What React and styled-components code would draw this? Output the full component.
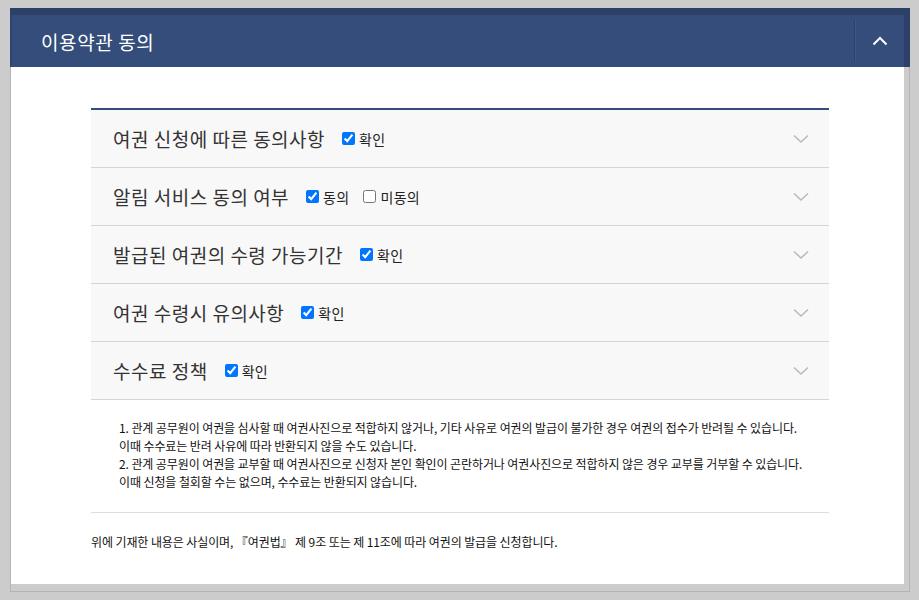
import React, { useState } from "react";
import styled, { createGlobalStyle } from "styled-components";

const GlobalStyle = createGlobalStyle`
  html, body {
    margin: 0;
    padding: 0;
    background: #cccccc;
  }
  body {
    font-family: "Noto Sans CJK KR", "Noto Sans", sans-serif;
    color: #333;
  }
`;

const Frame = styled.div`
  margin: 8px 9px 0 10px;
  width: 898px;
  border: 1px solid #b4b4b4;
  border-top: none;
  background: #cccccc;
  padding-bottom: 7px;
`;

const Header = styled.div`
  display: flex;
  align-items: center;
  height: 52px;
  margin-left: -1px;
  margin-right: -1px;
  background: #344d7a;
  border-top: 7px solid #2c4068;
  border-left: 2px solid #2f4570;
  border-right: 6px solid #2c4068;
`;

const Title = styled.h2`
  flex: 1;
  margin: 0;
  padding-left: 29px;
  font-size: 19px;
  font-weight: 400;
  color: #fff;
  letter-spacing: 0.6px;
`;

const Toggle = styled.button`
  width: 50px;
  height: 42px;
  display: flex;
  align-items: center;
  justify-content: center;
  background: none;
  border: none;
  border-left: 1px solid #2b4068;
  box-shadow: inset 1px 0 0 #3e5784;
  padding: 0;
  cursor: pointer;
`;

const Body = styled.div`
  background: #fff;
  margin-right: 5px;
  padding: 41px 75px 33px 80px;
`;

const List = styled.div`
  border-top: 2px solid #344d7a;
`;

const Row = styled.div`
  display: flex;
  align-items: center;
  height: 57px;
  padding: 0 20px 0 22px;
  background: #f8f8f8;
  border-bottom: 1px solid #d4d4d4;
`;

const RowTitle = styled.span`
  font-size: 19px;
  color: #333;
  margin-right: 17px;
  letter-spacing: 0.5px;
`;

const Check = styled.label`
  display: flex;
  align-items: center;
  gap: 4px;
  margin-right: 14px;
  font-size: 14px;
  color: #222;
  letter-spacing: 0.3px;
  cursor: pointer;

  input {
    margin: 0;
    width: 13px;
    height: 13px;
  }
`;

const Spacer = styled.div`
  flex: 1;
`;

const Notes = styled.div`
  padding: 19px 0 21px 28px;
  border-bottom: 1px solid #dedede;
  font-size: 12px;
  line-height: 18px;
  color: #111;
  letter-spacing: -0.1px;

  p {
    margin: 0;
  }
`;

const Statement = styled.p`
  margin: 0;
  padding-top: 20px;
  font-size: 12px;
  line-height: 18px;
  color: #111;
  letter-spacing: -0.1px;
`;

const ChevronDown = () => (
  <svg width="16" height="10" viewBox="0 0 16 10" fill="none">
    <path d="M1 1.5 L8 8 L15 1.5" stroke="#b9b9b9" strokeWidth="1.5" />
  </svg>
);

const ChevronUp = () => (
  <svg width="16" height="10" viewBox="0 0 16 10" fill="none">
    <path d="M1.5 8.5 L8 2 L14.5 8.5" stroke="#fff" strokeWidth="2" />
  </svg>
);

const rows = [
  { title: "여권 신청에 따른 동의사항", options: [["확인", true]] },
  { title: "알림 서비스 동의 여부", options: [["동의", true], ["미동의", false]] },
  { title: "발급된 여권의 수령 가능기간", options: [["확인", true]] },
  { title: "여권 수령시 유의사항", options: [["확인", true]] },
  { title: "수수료 정책", options: [["확인", true]] },
];

export default function App() {
  const [checks, setChecks] = useState(
    rows.map((r) => r.options.map((o) => o[1]))
  );

  const toggle = (i, j) => {
    const next = checks.map((r) => [...r]);
    next[i][j] = !next[i][j];
    setChecks(next);
  };

  return (
    <>
      <GlobalStyle />
      <Frame>
        <Header>
          <Title>이용약관 동의</Title>
          <Toggle aria-label="접기">
            <ChevronUp />
          </Toggle>
        </Header>
        <Body>
          <List>
            {rows.map((row, i) => (
              <Row key={row.title}>
                <RowTitle>{row.title}</RowTitle>
                {row.options.map(([label], j) => (
                  <Check key={label}>
                    <input
                      type="checkbox"
                      checked={checks[i][j]}
                      onChange={() => toggle(i, j)}
                    />
                    {label}
                  </Check>
                ))}
                <Spacer />
                <ChevronDown />
              </Row>
            ))}
          </List>
          <Notes>
            <p>
              1. 관계 공무원이 여권을 심사할 때 여권사진으로 적합하지 않거나, 기타 사유로 여권의 발급이 불가한 경우 여권의 접수가 반려될 수 있습니다.
            </p>
            <p>이때 수수료는 반려 사유에 따라 반환되지 않을 수도 있습니다.</p>
            <p>
              2. 관계 공무원이 여권을 교부할 때 여권사진으로 신청자 본인 확인이 곤란하거나 여권사진으로 적합하지 않은 경우 교부를 거부할 수 있습니다.
            </p>
            <p>이때 신청을 철회할 수는 없으며, 수수료는 반환되지 않습니다.</p>
          </Notes>
          <Statement>
            위에 기재한 내용은 사실이며, 『여권법』 제 9조 또는 제 11조에 따라 여권의 발급을 신청합니다.
          </Statement>
        </Body>
      </Frame>
    </>
  );
}
